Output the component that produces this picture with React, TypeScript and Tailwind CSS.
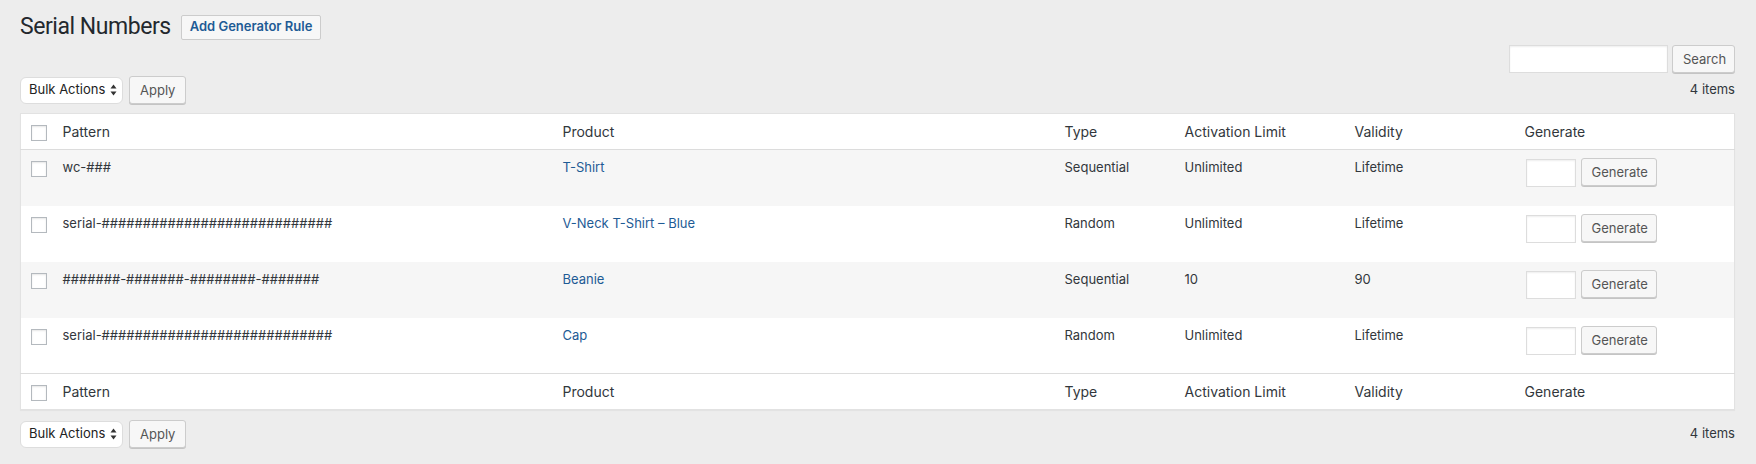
import type {FC} from "react";

type Rule = {
    pattern: string;
    product: string;
    type: string;
    limit: string;
    validity: string;
};

const rules: Rule[] = [
    {pattern: "wc-###", product: "T-Shirt", type: "Sequential", limit: "Unlimited", validity: "Lifetime"},
    {pattern: "serial-############################", product: "V-Neck T-Shirt – Blue", type: "Random", limit: "Unlimited", validity: "Lifetime"},
    {pattern: "#######-#######-########-#######", product: "Beanie", type: "Sequential", limit: "10", validity: "90"},
    {pattern: "serial-############################", product: "Cap", type: "Random", limit: "Unlimited", validity: "Lifetime"},
];

const columns = ["Pattern", "Product", "Type", "Activation Limit", "Validity", "Generate"];

const Checkbox: FC = () => (
    <input
        type="checkbox"
        className="appearance-none block w-4 h-4 m-0 bg-white border border-[#b4b9be] shadow-[inset_0_1px_2px_rgba(0,0,0,0.1)]"
    />
);

const WpButton: FC<{ label: string; className?: string }> = ({label, className = ""}) => (
    <button
        type="button"
        className={`h-7 px-[10px] bg-[#f7f7f7] border border-[#cccccc] rounded-[3px] shadow-[0_1px_0_#c4c4c4] text-[13px] leading-[26px] text-[#555555] ${className}`}
    >
        {label}
    </button>
);

/* native-looking mac select */
const BulkSelect: FC = () => (
    <div className="flex items-center h-[27px] w-[103px] pl-[8px] pr-[5px] bg-white border border-[#dddddd] rounded-[6px] text-[13px] text-[#222222]">
        <span className="flex-1">Bulk Actions</span>
        <svg viewBox="0 0 7 12" className="w-[7px] h-[12px]" aria-hidden="true">
            <path d="M3.5 0.5 L6.5 4.5 L0.5 4.5 Z" fill="#333"/>
            <path d="M3.5 11.5 L6.5 7.5 L0.5 7.5 Z" fill="#333"/>
        </svg>
    </div>
);

const TableNav: FC<{ className?: string }> = ({className = ""}) => (
    <div className={`flex items-center justify-between h-7 ${className}`}>
        <div className="flex items-center gap-[6px]">
            <BulkSelect/>
            <WpButton label="Apply" className="w-[57px]"/>
        </div>
        <span className="text-[13px] text-[#32373c]">4 items</span>
    </div>
);

const HeadRow: FC<{ border: "top" | "bottom" }> = ({border}) => (
    <tr className={border === "bottom" ? "border-b border-[#dcdcdc]" : "border-t border-[#dcdcdc]"}>
        <th className="w-[32px] pl-[10px] pt-[11px] align-top">
            <Checkbox/>
        </th>
        {columns.map((c) => (
            <th
                key={c}
                className="px-[10px] py-2 text-left align-top font-normal text-[14px] leading-[19px] text-[#32373c]"
            >
                {c}
            </th>
        ))}
    </tr>
);

export default function App() {
    return (
        <div className="min-h-screen bg-[#ededed] pl-5 pr-[21px] pt-3 font-['Inter','Liberation_Sans',sans-serif] text-[#32373c]">
            {/* title */}
            <div className="flex items-center h-[30px]">
                <h1 className="font-['Roboto','Liberation_Sans',sans-serif] text-[23px] leading-[30px] tracking-[-0.02em] font-normal text-[#23282d]">
                    Serial Numbers
                </h1>
                <button
                    type="button"
                    className="ml-[10px] h-[25px] px-2 bg-[#f7f7f7] border border-[#cccccc] rounded-[2px] text-[13px] font-semibold text-[#1e5b95]"
                >
                    Add Generator Rule
                </button>
            </div>

            {/* search */}
            <div className="flex justify-end mt-[3px] h-7">
                <input
                    type="search"
                    className="w-[159px] h-7 bg-white border border-[#dddddd] shadow-[inset_0_1px_2px_rgba(0,0,0,0.07)] outline-none"
                />
                <WpButton label="Search" className="ml-1 w-[63px]"/>
            </div>

            <TableNav className="mt-[3px]"/>

            <table className="w-full mt-[9px] table-fixed bg-white border border-[#e2e2e2] shadow-[0_1px_1px_rgba(0,0,0,0.04)]">
                <colgroup>
                    <col className="w-[32px]"/>
                    <col className="w-[500px]"/>
                    <col className="w-[502px]"/>
                    <col className="w-[120px]"/>
                    <col className="w-[170px]"/>
                    <col className="w-[170px]"/>
                    <col/>
                </colgroup>
                <thead>
                <HeadRow border="bottom"/>
                </thead>
                <tbody>
                {rules.map((r, i) => (
                    <tr key={i} className={`h-14 ${i % 2 === 0 ? "bg-[#f6f6f6]" : "bg-white"}`}>
                        <td className="pl-[10px] pt-[11px] align-top">
                            <Checkbox/>
                        </td>
                        <td className="px-[10px] py-2 align-top text-[13px] leading-[19.5px] text-[#32373c]">{r.pattern}</td>
                        <td className="px-[10px] py-2 align-top text-[13px] leading-[19.5px]">
                            <a href="#" className="text-[#1e5b95]">{r.product}</a>
                        </td>
                        <td className="px-[10px] py-2 align-top text-[13px] leading-[19.5px] text-[#32373c]">{r.type}</td>
                        <td className="px-[10px] py-2 align-top text-[13px] leading-[19.5px] text-[#32373c]">{r.limit}</td>
                        <td className="px-[10px] py-2 align-top text-[13px] leading-[19.5px] text-[#32373c]">{r.validity}</td>
                        <td className="px-[10px] py-2 align-top">
                            <div className="flex items-start">
                                <input
                                    type="text"
                                    className="ml-px mt-px w-[50px] h-7 bg-white border border-[#dddddd] shadow-[inset_0_1px_2px_rgba(0,0,0,0.07)] outline-none"
                                />
                                <WpButton label="Generate" className="ml-[5px] w-[76px]"/>
                            </div>
                        </td>
                    </tr>
                ))}
                </tbody>
                <tfoot>
                <HeadRow border="top"/>
                </tfoot>
            </table>

            <TableNav className="mt-[10px]"/>
        </div>
    );
}
